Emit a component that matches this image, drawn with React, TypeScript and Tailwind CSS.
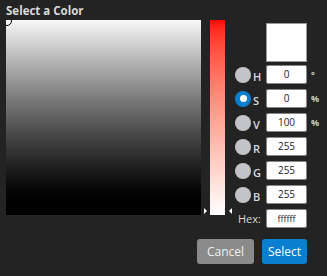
import { useState } from 'react';

const rows = [
  { key: 'H', value: '0', unit: '°' },
  { key: 'S', value: '0', unit: '%' },
  { key: 'V', value: '100', unit: '%' },
  { key: 'R', value: '255', unit: '' },
  { key: 'G', value: '255', unit: '' },
  { key: 'B', value: '255', unit: '' },
];

function Radio({ checked }: { checked: boolean }) {
  return checked ? (
    <span className="flex h-4 w-4 items-center justify-center rounded-full bg-[#0a7fd0]">
      <span className="h-[7px] w-[7px] rounded-full bg-white" />
    </span>
  ) : (
    <span className="h-4 w-4 rounded-full bg-[#c2c4c8]" />
  );
}

export default function App() {
  const [mode, setMode] = useState('S');

  return (
    <div className="h-[276px] w-[327px] bg-[#232323] font-['Open_Sans','Noto_Sans',sans-serif] text-[#d9d9d9]">
      <div className="px-[6px] pt-[2px] text-[11.5px] font-bold leading-[17px]">Select a Color</div>
      <div className="flex pl-[6px] pt-px">
        <div className="relative h-[195px] w-[195px] overflow-hidden bg-gradient-to-b from-[#f8f8f8] to-black">
          <span className="absolute -left-[4px] -top-[4px] h-[10px] w-[10px] rounded-full border border-black" />
        </div>
        <div className="relative ml-[9px] h-[195px] w-[15px] bg-gradient-to-b from-[#ff0000] to-white">
          <span className="absolute -left-[6px] bottom-[1px] h-0 w-0 border-y-[3px] border-l-[3px] border-y-transparent border-l-white" />
          <span className="absolute -right-[7px] bottom-[1px] h-0 w-0 border-y-[3px] border-r-[3px] border-y-transparent border-r-white" />
        </div>
        <div className="ml-[10px] flex flex-col pt-[3px]">
          <div className="ml-[31px] h-[39px] w-[41px] border border-[#999] bg-white" />
          <div className="mt-[3px] flex flex-col gap-[5px]">
            {rows.map((r) => (
              <div key={r.key} className="flex h-[19px] items-center" onClick={() => setMode(r.key)}>
                <Radio checked={mode === r.key} />
                <span className="ml-[2px] mt-[4px] w-[13px] text-[11px] font-semibold leading-none">{r.key}</span>
                <div className="flex h-[19px] w-[41px] items-center justify-center rounded-[2px] border border-[#888] bg-white text-[10px] text-[#222]">
                  {r.value}
                </div>
                <span className="ml-[4px] text-[9px] font-bold text-[#ccc]">{r.unit}</span>
              </div>
            ))}
            <div className="flex h-[19px] items-center">
              <span className="ml-[3px] w-[28px] text-[11px] leading-none">Hex:</span>
              <div className="flex h-[19px] w-[41px] items-center justify-center rounded-[2px] border border-[#888] bg-white text-[9px] text-[#222]">
                ffffff
              </div>
            </div>
          </div>
        </div>
      </div>
      <div className="mt-[11px] flex justify-end gap-[8px] pr-[20px]">
        <button className="h-[25px] w-[57px] rounded-[3px] bg-[#8a8a8a] text-[12px] text-[#f0f0f0]">Cancel</button>
        <button className="h-[25px] w-[45px] rounded-[3px] bg-[#0a7fd0] text-[12px] text-white">Select</button>
      </div>
    </div>
  );
}
